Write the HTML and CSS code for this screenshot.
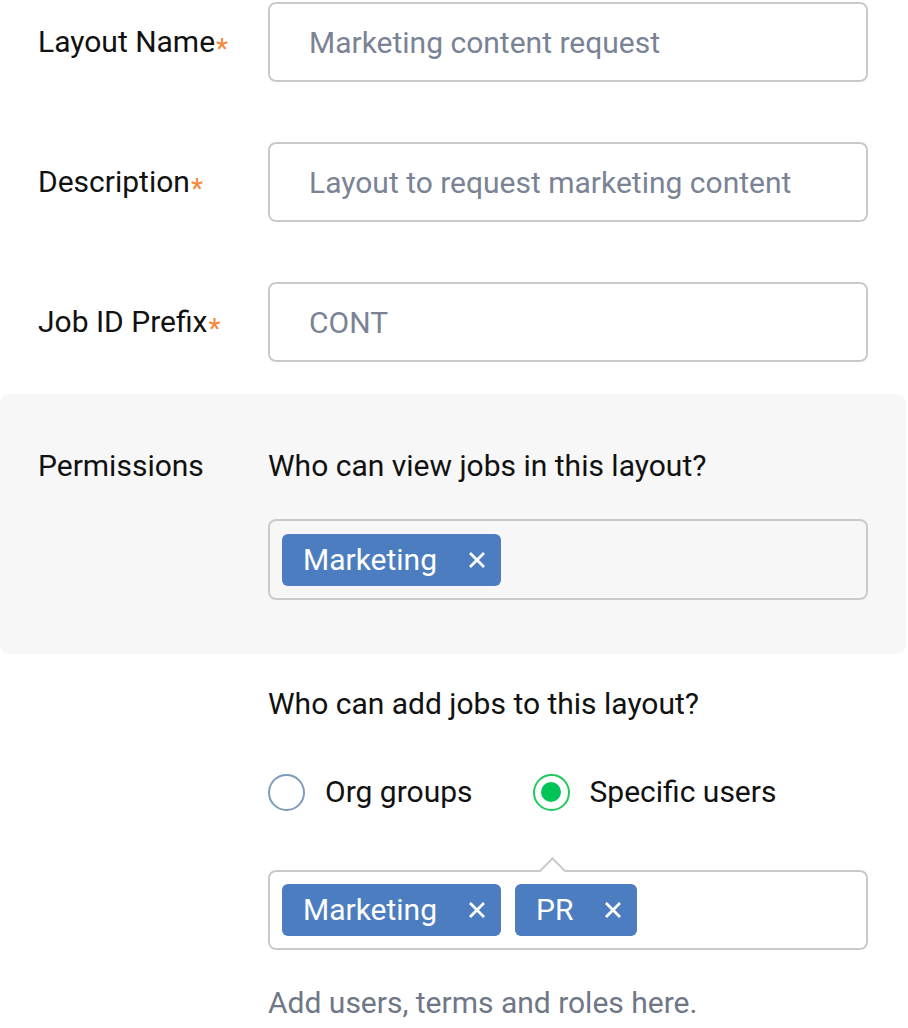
FILE: index.html
```html
<!DOCTYPE html>
<html lang="en">
<head>
  <meta charset="UTF-8" />
  <title>Layout settings</title>
  <link rel="stylesheet" href="styles.css">
</head>
<body>
  <main class="layout-form">
    <div class="row">
      <label class="row-label" for="layoutName">Layout Name<span class="req">*</span></label>
      <input class="text-input" id="layoutName" type="text" placeholder="Marketing content request" />
    </div>

    <div class="row">
      <label class="row-label" for="description">Description<span class="req">*</span></label>
      <input class="text-input" id="description" type="text" placeholder="Layout to request marketing content" />
    </div>

    <div class="row">
      <label class="row-label" for="prefix">Job ID Prefix<span class="req">*</span></label>
      <input class="text-input" id="prefix" type="text" placeholder="CONT" />
    </div>

    <section class="permissions">
      <div class="perm-row">
        <div class="perm-label">Permissions</div>
        <div class="perm-field">
          <p class="question">Who can view jobs in this layout?</p>
          <div class="tag-box">
            <span class="tag">Marketing
              <svg class="tag-x" viewBox="0 0 18 18"><path d="M2 2L16 16M16 2L2 16" /></svg>
            </span>
          </div>
        </div>
      </div>
    </section>

    <section class="add-jobs">
      <div class="perm-row">
        <div class="perm-label"></div>
        <div class="perm-field">
          <p class="question">Who can add jobs to this layout?</p>

          <div class="radios">
            <label class="radio">
              <span class="radio-circle"></span>
              Org groups
            </label>
            <label class="radio checked">
              <span class="radio-circle"></span>
              Specific users
            </label>
          </div>

          <div class="tag-box with-caret">
            <span class="tag">Marketing
              <svg class="tag-x" viewBox="0 0 18 18"><path d="M2 2L16 16M16 2L2 16" /></svg>
            </span>
            <span class="tag">PR
              <svg class="tag-x" viewBox="0 0 18 18"><path d="M2 2L16 16M16 2L2 16" /></svg>
            </span>
          </div>

          <p class="help">Add users, terms and roles here.</p>
        </div>
      </div>
    </section>
  </main>
</body>
</html>
```

FILE: styles.css
```css
* {
  box-sizing: border-box;
  margin: 0;
  padding: 0;
}

body {
  font-family: Roboto, 'Liberation Sans', sans-serif;
  font-size: 30px;
  line-height: 36px;
  color: #111;
  background: #fff;
}

.layout-form {
  padding-top: 2px;
}

.row {
  display: flex;
  align-items: center;
  height: 80px;
  padding-left: 38px;
  margin-bottom: 60px;
}

.row:nth-child(3) {
  margin-bottom: 32px;
}

.row-label {
  width: 230px;
  flex-shrink: 0;
}

.req {
  color: #f5873a;
  font-size: 28px;
  line-height: 0;
  vertical-align: -6px;
  margin-left: 1px;
}

.text-input {
  width: 600px;
  height: 80px;
  border: 2px solid #cacaca;
  border-radius: 8px;
  padding: 0 39px;
  font-family: inherit;
  font-size: 30px;
  color: #111;
  background: #fff;
  outline: none;
}

.text-input::placeholder {
  color: #7a8395;
}

.permissions {
  background: #f7f7f7;
  border-radius: 10px;
  margin-right: 2px;
  padding: 54px 0;
}

.add-jobs {
  margin-top: 32px;
}

.perm-row {
  display: flex;
  padding-left: 38px;
}

.perm-label {
  width: 230px;
  flex-shrink: 0;
}

.perm-field {
  width: 600px;
}

.tag-box {
  display: flex;
  align-items: center;
  gap: 14px;
  height: 81px;
  margin-top: 35px;
  padding: 0 12px;
  border: 2px solid #cacaca;
  border-radius: 8px;
}

.with-caret {
  position: relative;
  height: 80px;
  margin-top: 60px;
  background: #fff;
}

.with-caret::before {
  content: '';
  position: absolute;
  top: -11px;
  left: 273px;
  width: 17px;
  height: 17px;
  background: #fff;
  border-top: 2px solid #cacaca;
  border-left: 2px solid #cacaca;
  transform: rotate(45deg);
}

.tag {
  display: inline-flex;
  align-items: center;
  height: 52px;
  padding: 0 15px 0 21px;
  border-radius: 6px;
  background-color: #4d7dc1;
  color: #fff;
}

.tag-x {
  width: 18px;
  height: 18px;
  margin-left: 31px;
  fill: none;
  stroke: #fff;
  stroke-width: 2.8;
}

.radios {
  display: flex;
  gap: 60px;
  margin-top: 52px;
}

.radio {
  display: flex;
  align-items: center;
  gap: 20px;
  height: 36px;
}

.radio-circle {
  width: 37px;
  height: 37px;
  border: 2px solid #7d9dbf;
  border-radius: 50%;
  display: flex;
  align-items: center;
  justify-content: center;
  background: #fff;
}

.radio.checked .radio-circle {
  border-color: #22c95e;
}

.radio.checked .radio-circle::after {
  content: '';
  width: 20px;
  height: 20px;
  border-radius: 50%;
  background-color: #00c455;
}

.help {
  margin-top: 35px;
  color: #6f7787;
}
```
